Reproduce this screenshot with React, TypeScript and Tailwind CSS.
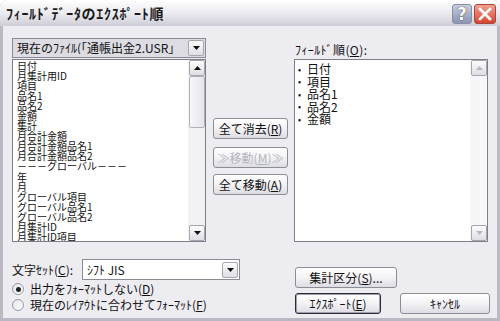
import React from "react";

const F = { fontFamily: '"Noto Sans CJK JP", "Noto Sans", sans-serif' };

function Btn({ children, w, disabled, def }: { children: React.ReactNode; w: string; disabled?: boolean; def?: boolean }) {
  return (
    <div
      className={`${w} h-[21px] flex items-center justify-center rounded-[3px] text-[12px] leading-none bg-gradient-to-b from-[#ffffff] via-[#f3f3f6] to-[#dcdce3] ${
        def ? "border border-[#2c2c34] shadow-[inset_0_0_0_1px_#9fa0b4]" : "border border-[#8d8d98]"
      } ${disabled ? "text-[#b4b4bc]" : "text-[#111]"}`}
    >
      {children}
    </div>
  );
}

function Arrow({ up, disabled }: { up?: boolean; disabled?: boolean }) {
  return (
    <div className="w-[16px] h-[16px] flex items-center justify-center border border-[#a6a6b0] rounded-[2px] bg-gradient-to-b from-[#fdfdfd] to-[#dedee4]">
      <svg width="7" height="4" viewBox="0 0 7 4">
        {up ? (
          <path d="M0 4 L3.5 0 L7 4 Z" fill={disabled ? "#b8b8c0" : "#111"} />
        ) : (
          <path d="M0 0 L3.5 4 L7 0 Z" fill={disabled ? "#b8b8c0" : "#111"} />
        )}
      </svg>
    </div>
  );
}

const leftItems = [
  "日付",
  "月集計用ID",
  "項目",
  "品名1",
  "品名2",
  "金額",
  "集計",
  "月合計金額",
  "月合計金額品名1",
  "月合計金額品名2",
  "－－－グローバル－－－",
  "年",
  "月",
  "グローバル項目",
  "グローバル品名1",
  "グローバル品名2",
  "月集計ID",
  "月集計ID項目",
];

const rightItems = ["日付", "項目", "品名1", "品名2", "金額"];

export default function App() {
  return (
    <div style={F} className="w-[500px] h-[321px] flex flex-col bg-[#b9b8c3] rounded-t-[7px] overflow-hidden text-[#111]">
      {/* Title bar */}
      <div className="h-[26px] flex items-center justify-between bg-gradient-to-b from-[#ffffff] via-[#ebebf0] to-[#cfced8] pl-[6px] pr-[4px]">
        <span className="text-[14px] font-bold tracking-[0.7px] text-[#1a1a1a] leading-none">ﾌｨｰﾙﾄﾞﾃﾞｰﾀのｴｸｽﾎﾟｰﾄ順</span>
        <div className="flex gap-[2px] mt-[2px]">
          <div className="w-[20px] h-[20px] rounded-[3px] border border-[#8a8fa8] bg-gradient-to-b from-[#c9cde0] to-[#8d93b2] flex items-center justify-center">
            <span className="text-[17px] font-bold text-white leading-none [text-shadow:0_0_1px_#444,0_0_1px_#444]" style={{ fontFamily: '"DejaVu Sans", sans-serif' }}>?</span>
          </div>
          <div className="w-[22px] h-[20px] rounded-[3px] border border-[#a8483c] bg-gradient-to-b from-[#f0a090] to-[#d4442e] flex items-center justify-center">
            <svg width="14" height="14" viewBox="0 0 14 14">
              <path d="M2 2 L12 12 M12 2 L2 12" stroke="#fff" strokeWidth="2.6" strokeLinecap="square" />
            </svg>
          </div>
        </div>
      </div>

      {/* Body */}
      <div className="flex-1 mx-[3px] mb-[3px] bg-[#edecf1] px-[9px] flex flex-col">
        <div className="flex pt-[12px]">
          {/* Left column */}
          <div className="w-[194px] flex flex-col">
            <div className="h-[20px] flex items-center border border-[#8b8b96] bg-[#dcdce2]">
              <div className="flex-1 overflow-hidden whitespace-nowrap text-[12px] leading-none pl-[4px]">現在のﾌｧｲﾙ(「通帳出金2.USR」</div>
              <div className="mr-[1px]">
                <Arrow />
              </div>
            </div>
            <div className="mt-[1px] h-[183px] flex border border-[#7e7e8a] bg-white">
              <div className="flex-1 overflow-hidden pl-[4px] pt-[1px] text-[10px] leading-[10.05px] whitespace-nowrap">
                {leftItems.map((t) => (
                  <div key={t} className="h-[10.05px]">{t}</div>
                ))}
              </div>
              <div className="w-[17px] flex flex-col bg-[#f2f2f5] pl-[1px]">
                <Arrow up />
                <div className="h-[52px] border border-[#b0b0ba] rounded-[2px] bg-gradient-to-r from-[#f8f8fa] to-[#e4e4ea]" />
                <div className="flex-1" />
                <Arrow />
              </div>
            </div>
          </div>

          {/* Middle buttons */}
          <div className="ml-[7px] w-[75px] flex flex-col pt-[80px]">
            <Btn w="w-[75px]">全て消去(<u>R</u>)</Btn>
            <div className="h-[8px]" />
            <Btn w="w-[75px]" disabled>≫移動(<u>M</u>)≫</Btn>
            <div className="h-[6px]" />
            <Btn w="w-[75px]">全て移動(<u>A</u>)</Btn>
          </div>

          {/* Right column */}
          <div className="ml-[6px] w-[194px] flex flex-col">
            <div className="h-[21px] flex items-end pb-[3px] pl-[1px] text-[12px] leading-none tracking-[0.4px]">ﾌｨｰﾙﾄﾞ順(<u>O</u>):</div>
            <div className="h-[183px] flex border border-[#7e7e8a] bg-white">
              <div className="flex-1 pl-[3px] pt-[3px] text-[12px] leading-[12.5px]">
                {rightItems.map((t) => (
                  <div key={t} className="h-[12.5px] flex items-center">
                    <span className="w-[9px] text-[9px] leading-none">•</span>
                    <span>{t}</span>
                  </div>
                ))}
              </div>
              <div className="w-[17px] flex flex-col bg-[#f7f7f9] pl-[1px]">
                <Arrow up disabled />
                <div className="flex-1" />
                <Arrow disabled />
              </div>
            </div>
          </div>
        </div>

        {/* Bottom */}
        <div className="flex mt-[17px]">
          <div className="w-[228px] flex flex-col">
            <div className="h-[21px] flex items-center">
              <span className="w-[70px] text-[12px] leading-none">文字ｾｯﾄ(<u>C</u>):</span>
              <div className="w-[158px] h-[21px] flex items-center border border-[#8b8b96] bg-white">
                <span className="flex-1 pl-[4px] text-[12px] leading-none">ｼﾌﾄ JIS</span>
                <div className="mr-[1px]">
                  <Arrow />
                </div>
              </div>
            </div>
            <div className="h-[16px] mt-[1px] flex items-center">
              <div className="w-[12px] h-[12px] rounded-full border border-[#9a9aa6] bg-gradient-to-br from-[#e4e4ea] to-white flex items-center justify-center">
                <div className="w-[5px] h-[5px] rounded-full bg-[#222]" />
              </div>
              <span className="ml-[6px] text-[12px] leading-none">出力をﾌｫｰﾏｯﾄしない(<u>D</u>)</span>
            </div>
            <div className="h-[16px] flex items-center">
              <div className="w-[12px] h-[12px] rounded-full border border-[#9a9aa6] bg-gradient-to-br from-[#e4e4ea] to-white" />
              <span className="ml-[6px] text-[12px] leading-none">現在のﾚｲｱｳﾄに合わせてﾌｫｰﾏｯﾄ(<u>F</u>)</span>
            </div>
          </div>
          <div className="ml-[55px] flex flex-col pt-[8px]">
            <Btn w="w-[102px]">集計区分(<u>S</u>)...</Btn>
            <div className="flex mt-[5px]">
              <Btn w="w-[86px]" def>ｴｸｽﾎﾟｰﾄ(<u>E</u>)</Btn>
              <div className="ml-[19px]">
                <Btn w="w-[90px]">ｷｬﾝｾﾙ</Btn>
              </div>
            </div>
          </div>
        </div>
      </div>
    </div>
  );
}
